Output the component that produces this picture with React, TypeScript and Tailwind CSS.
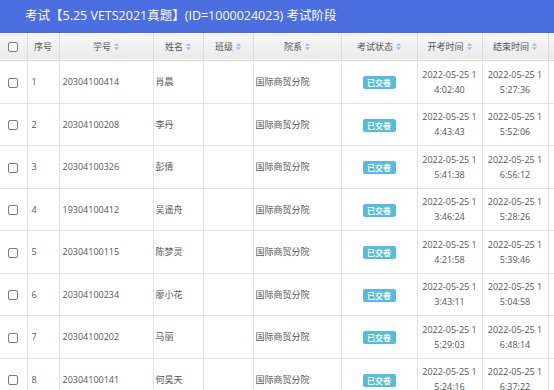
import React from "react";

const rows = [
  ["1", "20304100414", "肖晨", "4:02:40", "5:27:36"],
  ["2", "20304100208", "李丹", "4:43:43", "5:52:06"],
  ["3", "20304100326", "彭倩", "5:41:38", "6:56:12"],
  ["4", "19304100412", "吴遥舟", "3:46:24", "5:28:26"],
  ["5", "20304100115", "陈梦灵", "4:21:58", "5:39:46"],
  ["6", "20304100234", "廖小花", "3:43:11", "5:04:58"],
  ["7", "20304100202", "马丽", "5:29:03", "6:48:14"],
  ["8", "20304100141", "何昊天", "5:24:16", "6:37:22"],
];

const heights = ["h-[43px]", "h-[42px]", "h-[43px]", "h-[42px]", "h-[43px]", "h-[42px]", "h-[43px]", "h-[42px]"];

function Sort() {
  return (
    <svg width="5" height="7" viewBox="0 0 5 7" className="inline-block ml-[3px] align-[0px]">
      <path d="M2.5 0 L5 2.8 L0 2.8 Z" fill="#9db9e4" />
      <path d="M2.5 7 L5 4.2 L0 4.2 Z" fill="#9db9e4" />
    </svg>
  );
}

function Box() {
  return <span className="inline-block w-[10px] h-[10px] rounded-[2px] border border-[#7a7a7a] bg-white align-middle" />;
}

export default function App() {
  const th = "border-r border-[#dcdcdc] text-center font-normal text-[#555] px-0";
  const td = "border-r border-b border-[#e3e3e3] text-[#555] align-middle";
  return (
    <div className="w-[554px] h-[390px] overflow-hidden bg-white" style={{ fontFamily: '"Open Sans", "Noto Sans CJK SC", sans-serif' }}>
      <div className="h-[33px] bg-[#4b6ee0] flex items-center pl-[25px] text-white text-[12.5px]">
        考试【5.25 VETS2021真题】(ID=1000024023) 考试阶段
      </div>
      <table className="table-fixed border-collapse w-[608px] text-[9px] leading-[15px]">
        <colgroup>
          <col className="w-[27px]" />
          <col className="w-[32px]" />
          <col className="w-[94px]" />
          <col className="w-[50px]" />
          <col className="w-[50px]" />
          <col className="w-[88px]" />
          <col className="w-[76px]" />
          <col className="w-[65px]" />
          <col className="w-[66px]" />
          <col className="w-[60px]" />
        </colgroup>
        <thead>
          <tr className="h-[27px] bg-gradient-to-b from-[#f8f8f8] to-[#ebebeb] border-b border-[#d6d6d6]">
            <th className={th}><Box /></th>
            <th className={th}>序号</th>
            <th className={th}>学号<Sort /></th>
            <th className={th}>姓名<Sort /></th>
            <th className={th}>班级<Sort /></th>
            <th className={th}>院系<Sort /></th>
            <th className={th}>考试状态<Sort /></th>
            <th className={th}>开考时间<Sort /></th>
            <th className={th}>结束时间<Sort /></th>
            <th className={th}></th>
          </tr>
        </thead>
        <tbody>
          {rows.map((r, i) => (
            <tr key={r[0]} className={heights[i]}>
              <td className={`${td} text-center`}><Box /></td>
              <td className={`${td} pl-[4px]`}>{r[0]}</td>
              <td className={`${td} pl-[3px]`}>{r[1]}</td>
              <td className={`${td} pl-[2px]`}>{r[2]}</td>
              <td className={td}></td>
              <td className={`${td} pl-[2px]`}>国际商贸分院</td>
              <td className={`${td} text-center`}>
                <span className="inline-block w-[33px] h-[13px] leading-[13px] rounded-[2px] bg-[#54bcdc] text-white text-[8px] font-bold align-middle">已交卷</span>
              </td>
              <td className={`${td} text-center`}>
                <div>2022-05-25 1</div>
                <div>{r[3]}</div>
              </td>
              <td className={`${td} text-center`}>
                <div>2022-05-25 1</div>
                <div>{r[4]}</div>
              </td>
              <td className={td}></td>
            </tr>
          ))}
        </tbody>
      </table>
    </div>
  );
}
